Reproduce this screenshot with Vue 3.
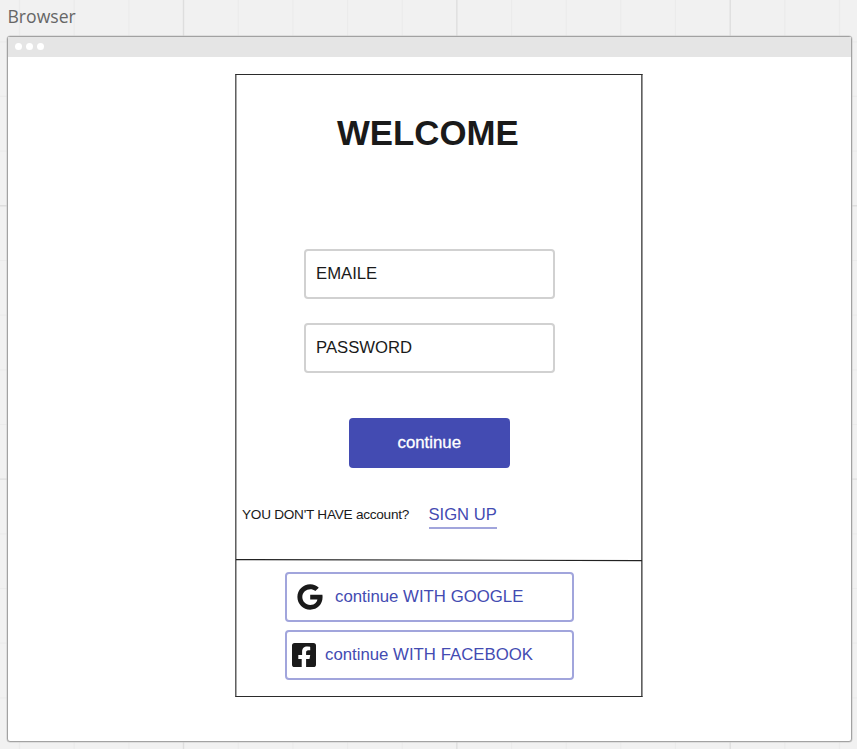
<script setup>
const step = 54.67
const columns = Array.from({ length: 16 }, (_, i) => ({ at: 19.5 + i * step, major: i % 5 === 3 }))
const rows = Array.from({ length: 13 }, (_, i) => ({ at: 41.8 + i * step, major: i % 5 === 3 }))
</script>

<template>
  <div class="board">
    <svg class="grid" width="857" height="749" aria-hidden="true">
      <line v-for="c in columns" :key="'c' + c.at" :x1="c.at" :x2="c.at" y1="0" y2="749" :class="{ major: c.major }" />
      <line v-for="r in rows" :key="'r' + r.at" x1="0" x2="857" :y1="r.at" :y2="r.at" :class="{ major: r.major }" />
    </svg>
    <div class="scene">
      <div class="caption">Browser</div>
      <div class="window">
        <div class="bar"><i></i><i></i><i></i></div>
        <main class="card">
          <h1>WELCOME</h1>
          <div class="field email">EMAILE</div>
          <div class="field">PASSWORD</div>
          <button class="primary">continue</button>
          <div class="signup">
            <span class="question">YOU DON'T HAVE account?</span>
            <a>SIGN UP</a>
          </div>
          <svg class="divider" width="406" height="3" viewBox="0 0 406 3" aria-hidden="true">
            <line x1="0" y1="0.6" x2="406" y2="1.6" />
          </svg>
          <button class="social google">
            <svg width="26" height="26" viewBox="0 0 26 26" aria-hidden="true">
              <path d="M13.2 10.8H25.4C26.6 19.2 21.2 25.7 13.2 25.7C6.1 25.7 .4 20 .4 13S6.1.3 13.2.3c3.5 0 6.4 1.3 8.6 3.4l-3.5 3.4C13.8 2.8 5.3 6 5.3 13c0 4.4 3.5 7.9 7.9 7.9 5 0 6.9-3.6 7.2-5.5h-7.2Z" />
            </svg>
            <span>continue WITH GOOGLE</span>
          </button>
          <button class="social facebook">
            <svg width="24" height="24" viewBox="0 0 24 24" aria-hidden="true">
              <path d="M2.6 0h18.8A2.6 2.6 0 0 1 24 2.6v18.8a2.6 2.6 0 0 1-2.6 2.6h-7.3v-8.1h3.4l.7-3.9h-4.1V9.3c0-1.1.5-2.1 2.2-2.1h1.9V3.9s-1.6-.3-3-.3c-3.1 0-5.1 1.9-5.1 5.2V12H6.3v3.9h3.4V24H2.6A2.6 2.6 0 0 1 0 21.4V2.6A2.6 2.6 0 0 1 2.6 0Z" />
            </svg>
            <span>continue WITH FACEBOOK</span>
          </button>
        </main>
      </div>
    </div>
  </div>
</template>

<style>
body {
  margin: 0;
  overflow: hidden;
}
</style>

<style scoped>
* {
  box-sizing: border-box;
}
.board {
  display: grid;
  width: 857px;
  height: 749px;
  overflow: hidden;
  background: #f1f1f1;
  font-family: "Liberation Sans", Arial, sans-serif;
  color: #1a1a1a;
}
.grid,
.scene {
  grid-area: 1 / 1;
}
.grid line {
  stroke: #ebebeb;
  stroke-width: 1.2;
}
.grid line.major {
  stroke: #dedede;
  stroke-width: 1.4;
}
.scene {
  padding: 0 5px 0 7px;
}
.caption {
  height: 36px;
  padding-left: 0.5px;
  font: 17.6px/33px "Open Sans", sans-serif;
  color: #666;
}
.window {
  display: flex;
  flex-direction: column;
  height: 706px;
  background: #fff;
  border: 1px solid #a2a2a2;
  border-radius: 3px;
  box-shadow: 0 0 0 0.5px #ccc;
}
.bar {
  display: flex;
  align-items: center;
  gap: 4px;
  height: 20px;
  padding: 0 0 1px 6.6px;
  background: #e5e5e5;
}
.bar i {
  width: 7px;
  height: 7px;
  border-radius: 50%;
  background: #fff;
}
.card {
  display: flex;
  flex-direction: column;
  width: 408px;
  height: 623px;
  margin: 17px 0 0 227px;
  border: 1px solid #2b2b2b;
  border-left-color: #606060;
  border-right-color: #999;
  box-shadow: inset 1px 0 #aaa, inset -1px 0 #606060;
}
h1 {
  margin: 37px 0 0 101px;
  font-size: 34.8px;
  line-height: 42px;
  font-weight: 700;
}
.field {
  width: 251.5px;
  height: 50px;
  margin: 24px 0 0 67.5px;
  padding-left: 10.5px;
  border: 2px solid #d1d1d1;
  border-radius: 4px;
  font-size: 16.7px;
  line-height: 45px;
}
.field.email {
  margin-top: 95px;
}
button {
  flex: none;
  font-family: inherit;
  font-size: 16.8px;
}
.primary {
  width: 161.5px;
  height: 50px;
  margin: 45px 0 0 112.5px;
  padding: 0;
  border: 0;
  border-radius: 4px;
  background: #434bb2;
  color: #fff;
  -webkit-text-stroke: 0.3px #fff;
}
.signup {
  display: flex;
  align-items: flex-start;
  height: 91px;
  padding: 34px 0 0 6px;
}
.question {
  width: 186.5px;
  font-size: 13.6px;
  letter-spacing: -0.25px;
  line-height: 26px;
  white-space: nowrap;
}
.signup a {
  height: 27px;
  border-bottom: 2px solid #a1a5dc;
  color: #434bb2;
  font-size: 16.6px;
  line-height: 26px;
}
.divider {
  flex: none;
}
.divider line {
  stroke: #222;
  stroke-width: 1.2;
}
.social {
  display: flex;
  align-items: center;
  width: 288.5px;
  height: 50px;
  margin-left: 49px;
  border: 2px solid #a1a5dc;
  border-radius: 4px;
  background: #fff;
  color: #434bb2;
  line-height: 20px;
}
.social svg {
  fill: #1a1a1a;
}
.google {
  margin-top: 10px;
  padding: 0 0 0 10px;
  gap: 12px;
}
.facebook {
  margin-top: 8px;
  padding: 0 0 0 5px;
  gap: 9px;
}
.social svg {
  margin-top: -1px;
}
</style>
